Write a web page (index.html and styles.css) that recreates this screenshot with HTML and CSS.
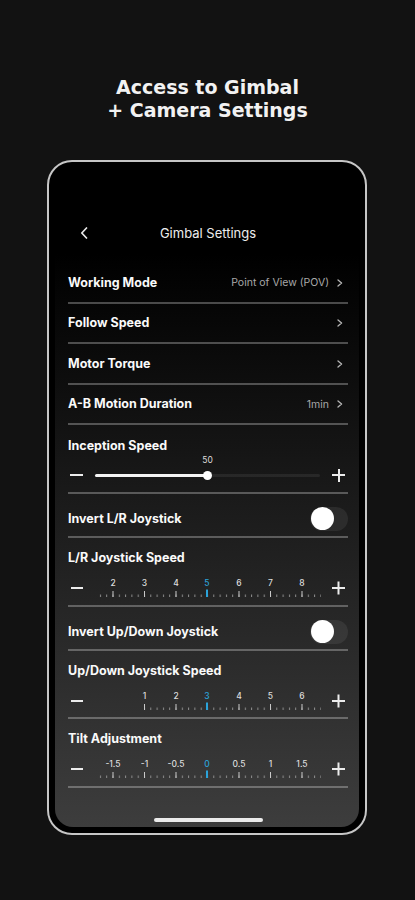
FILE: index.html
```html
<!DOCTYPE html>
<html lang="en">
<head>
<meta charset="utf-8">
<title>Gimbal Settings</title>
<link rel="stylesheet" href="styles.css">
</head>
<body>
<h1 class="title">Access to Gimbal<br>+ Camera Settings</h1>
<div class="phone">
  <div class="screen">
    <div class="header">
      <svg class="back" width="8" height="12" viewBox="0 0 8 12"><path d="M6.5 1 L1.8 6 L6.5 11" fill="none" stroke="#e8e8e8" stroke-width="1.7" stroke-linecap="round" stroke-linejoin="round"/></svg>
      <span class="header-title">Gimbal Settings</span>
      <span></span>
    </div>

    <div class="row">
      <span class="label">Working Mode</span>
      <span class="right"><span class="value">Point of View (POV)</span><svg class="chev" width="6" height="8" viewBox="0 0 6 8"><path d="M1 1 L4.6 4 L1 7" fill="none" stroke="#b5b5b5" stroke-width="1.3" stroke-linecap="round" stroke-linejoin="round"/></svg></span>
    </div>
    <div class="row">
      <span class="label">Follow Speed</span>
      <span class="right"><svg class="chev" width="6" height="8" viewBox="0 0 6 8"><path d="M1 1 L4.6 4 L1 7" fill="none" stroke="#b5b5b5" stroke-width="1.3" stroke-linecap="round" stroke-linejoin="round"/></svg></span>
    </div>
    <div class="row">
      <span class="label">Motor Torque</span>
      <span class="right"><svg class="chev" width="6" height="8" viewBox="0 0 6 8"><path d="M1 1 L4.6 4 L1 7" fill="none" stroke="#b5b5b5" stroke-width="1.3" stroke-linecap="round" stroke-linejoin="round"/></svg></span>
    </div>
    <div class="row">
      <span class="label">A-B Motion Duration</span>
      <span class="right"><span class="value">1min</span><svg class="chev" width="6" height="8" viewBox="0 0 6 8"><path d="M1 1 L4.6 4 L1 7" fill="none" stroke="#b5b5b5" stroke-width="1.3" stroke-linecap="round" stroke-linejoin="round"/></svg></span>
    </div>

    <div class="section slider-section">
      <span class="label">Inception Speed</span>
      <div class="slider" style="--v:50%">
        <span></span>
        <span class="slider-val">50</span>
        <span></span>
        <span class="minus"></span>
        <span class="track"><span class="fill"></span><span class="thumb"></span></span>
        <span class="plus"></span>
      </div>
    </div>

    <div class="toggle-row">
      <span class="label">Invert L/R Joystick</span>
      <span class="switch"><span class="knob"></span></span>
    </div>

    <div class="section speed">
      <span class="label">L/R Joystick Speed</span>
      <svg class="scale" width="280" height="24" viewBox="0 0 280 24">
        <defs><pattern id="tk1" x="44.5" y="0" width="6.3" height="24" patternUnits="userSpaceOnUse"><rect x="0" y="18.5" width="1" height="2.5" fill="#8c8c8c"/></pattern></defs>
        <rect x="29" y="0" width="224" height="24" fill="url(#tk1)"/>
        <g fill="#c9c9c9"><rect x="44.5" y="15" width="1" height="6"/><rect x="76" y="15" width="1" height="6"/><rect x="107.5" y="15" width="1" height="6"/><rect x="170.5" y="15" width="1" height="6"/><rect x="202" y="15" width="1" height="6"/><rect x="233.5" y="15" width="1" height="6"/></g>
        <rect x="138" y="13.5" width="2" height="7.5" fill="#2ba3da"/>
        <g class="nums"><text x="45" y="9.5">2</text><text x="76.5" y="9.5">3</text><text x="108" y="9.5">4</text><text class="blue" x="139" y="9.5">5</text><text x="171" y="9.5">6</text><text x="202.5" y="9.5">7</text><text x="234" y="9.5">8</text></g>
        <g fill="#ececec"><rect x="3" y="11" width="12" height="2"/><rect x="264" y="11" width="13" height="2"/><rect x="269.5" y="5.5" width="2" height="13"/></g>
      </svg>
    </div>

    <div class="toggle-row">
      <span class="label">Invert Up/Down Joystick</span>
      <span class="switch"><span class="knob"></span></span>
    </div>

    <div class="section speed speed-short">
      <span class="label">Up/Down Joystick Speed</span>
      <svg class="scale" width="280" height="24" viewBox="0 0 280 24">
        <defs><pattern id="tk2" x="76" y="0" width="6.3" height="24" patternUnits="userSpaceOnUse"><rect x="0" y="18.5" width="1" height="2.5" fill="#8c8c8c"/></pattern></defs>
        <rect x="76" y="0" width="177" height="24" fill="url(#tk2)"/>
        <g fill="#c9c9c9"><rect x="76" y="15" width="1" height="6"/><rect x="107.5" y="15" width="1" height="6"/><rect x="170.5" y="15" width="1" height="6"/><rect x="202" y="15" width="1" height="6"/><rect x="233.5" y="15" width="1" height="6"/></g>
        <rect x="138" y="13.5" width="2" height="7.5" fill="#2ba3da"/>
        <g class="nums"><text x="76.5" y="9.5">1</text><text x="108" y="9.5">2</text><text class="blue" x="139" y="9.5">3</text><text x="171" y="9.5">4</text><text x="202.5" y="9.5">5</text><text x="234" y="9.5">6</text></g>
        <g fill="#ececec"><rect x="3" y="11" width="12" height="2"/><rect x="264" y="11" width="13" height="2"/><rect x="269.5" y="5.5" width="2" height="13"/></g>
      </svg>
    </div>

    <div class="section speed">
      <span class="label">Tilt Adjustment</span>
      <svg class="scale" width="280" height="24" viewBox="0 0 280 24">
        <defs><pattern id="tk3" x="44.5" y="0" width="6.3" height="24" patternUnits="userSpaceOnUse"><rect x="0" y="18.5" width="1" height="2.5" fill="#8c8c8c"/></pattern></defs>
        <rect x="29" y="0" width="224" height="24" fill="url(#tk3)"/>
        <g fill="#c9c9c9"><rect x="44.5" y="15" width="1" height="6"/><rect x="76" y="15" width="1" height="6"/><rect x="107.5" y="15" width="1" height="6"/><rect x="170.5" y="15" width="1" height="6"/><rect x="202" y="15" width="1" height="6"/><rect x="233.5" y="15" width="1" height="6"/></g>
        <rect x="138" y="13.5" width="2" height="7.5" fill="#2ba3da"/>
        <g class="nums"><text x="45" y="9.5">-1.5</text><text x="76.5" y="9.5">-1</text><text x="108" y="9.5">-0.5</text><text class="blue" x="139" y="9.5">0</text><text x="171" y="9.5">0.5</text><text x="202.5" y="9.5">1</text><text x="234" y="9.5">1.5</text></g>
        <g fill="#ececec"><rect x="3" y="11" width="12" height="2"/><rect x="264" y="11" width="13" height="2"/><rect x="269.5" y="5.5" width="2" height="13"/></g>
      </svg>
    </div>

    <div class="home"></div>
  </div>
</div>
</body>
</html>
```

FILE: styles.css
```css
* { box-sizing: border-box; }

html, body {
  margin: 0;
  padding: 0;
  background: #121212;
}

body {
  width: 415px;
  min-height: 900px;
  font-family: Inter, "Noto Sans", sans-serif;
  color: #fff;
}

.title {
  margin: 0;
  padding-top: 76px;
  font-family: "DejaVu Sans", sans-serif;
  font-weight: 700;
  font-size: 19px;
  line-height: 23px;
  text-align: center;
  color: #f2f2f2;
}

.phone {
  margin: 38px 0 0 47px;
  width: 320px;
  height: 675px;
  padding: 6px;
  border: 2px solid #c6c6c6;
  border-radius: 25px;
  background: #000;
}

.screen {
  width: 304px;
  height: 659px;
  border-radius: 18px;
  padding: 0 11px 0 13px;
  background: linear-gradient(180deg, #000 0%, #000 13%, #3d3d3d 100%);
  display: flex;
  flex-direction: column;
}

.header {
  margin-top: 55px;
  margin-bottom: 20px;
  height: 20px;
  display: grid;
  grid-template-columns: 1fr auto 1fr;
  align-items: center;
}

.back {
  margin-left: 12px;
  display: block;
}

.header-title {
  font-size: 13px;
  font-weight: 400;
  color: #ededed;
}

.label {
  font-size: 12.5px;
  font-weight: 700;
  line-height: 16px;
  color: #fafafa;
}

.row {
  height: 40.5px;
  padding-top: 1px;
  border-bottom: 2px solid rgba(255, 255, 255, 0.28);
  display: flex;
  align-items: center;
  justify-content: space-between;
}

.right {
  display: flex;
  align-items: center;
}

.value {
  font-size: 10.5px;
  color: #a8a8a8;
}

.chev {
  display: block;
  margin-left: 8px;
  margin-right: 5px;
}

.section {
  border-bottom: 2px solid rgba(255, 255, 255, 0.28);
  display: flex;
  flex-direction: column;
}

.slider-section {
  height: 69px;
  padding-top: 13px;
}

.slider {
  margin-top: 1px;
  display: grid;
  grid-template-columns: 27px 225px 1fr;
  grid-template-rows: 10px 14px;
  row-gap: 3px;
  align-items: center;
}

.slider-val {
  font-size: 8.5px;
  line-height: 10px;
  color: #dcdcdc;
  margin-left: var(--v);
  transform: translateX(-50%);
  justify-self: start;
}

.minus {
  display: block;
  width: 13px;
  height: 2px;
  margin-left: 2px;
  background: #ececec;
}

.plus {
  justify-self: end;
  margin-right: 3px;
  width: 13px;
  height: 13px;
  background:
    linear-gradient(#ececec, #ececec) center / 13px 2px no-repeat,
    linear-gradient(#ececec, #ececec) center / 2px 13px no-repeat;
}

.track {
  height: 3px;
  border-radius: 2px;
  background: rgba(255, 255, 255, 0.07);
  display: flex;
  align-items: center;
}

.fill {
  width: var(--v);
  height: 3px;
  border-radius: 2px;
  background: #f4f4f4;
}

.thumb {
  width: 9px;
  height: 9px;
  margin-left: -4.5px;
  border-radius: 50%;
  background: #fff;
  flex: none;
}

.toggle-row {
  height: 44px;
  padding-top: 7px;
  border-bottom: 2px solid rgba(255, 255, 255, 0.28);
  display: flex;
  align-items: center;
  justify-content: space-between;
}

.switch {
  width: 38px;
  height: 24px;
  border-radius: 12px;
  background: rgba(255, 255, 255, 0.07);
  display: flex;
  align-items: center;
  padding-left: 1px;
}

.knob {
  width: 23px;
  height: 23px;
  border-radius: 50%;
  background: #fff;
}

.speed {
  height: 69px;
  padding-top: 12px;
}

.speed-short {
  height: 68px;
}

.scale {
  display: block;
  margin-top: 10px;
}

.nums text {
  font-family: Inter, sans-serif;
  font-size: 8.5px;
  font-weight: 500;
  fill: #dedede;
  text-anchor: middle;
}

.nums text.blue {
  fill: #2ba3da;
}

.home {
  margin-top: auto;
  margin-bottom: 5px;
  align-self: center;
  width: 109px;
  height: 4px;
  border-radius: 2px;
  background: #ececec;
}
```
